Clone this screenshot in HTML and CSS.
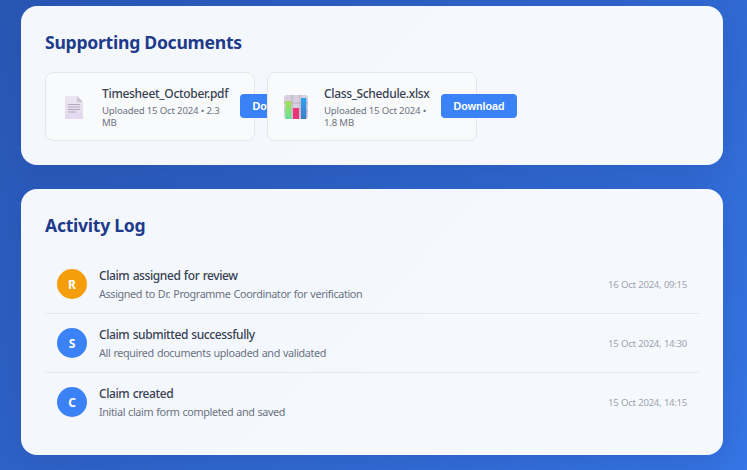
FILE: index.html
```html
<!DOCTYPE html>
<html lang="en">
<head>
<meta charset="utf-8">
<title>Claim details</title>
<link rel="stylesheet" href="styles.css">
</head>
<body>
<main class="page">
  <section class="card">
    <h2 class="card-title">Supporting Documents</h2>
    <div class="documents">
      <article class="document">
        <div class="document-icon">
          <svg width="24" height="24" viewBox="0 0 24 24">
            <defs><linearGradient id="paper" x1="0" y1="0" x2="0" y2="1"><stop offset="0" stop-color="#ece6f3"/><stop offset="1" stop-color="#e3d8ee"/></linearGradient></defs>
            <path d="M3 1H15L21 7V24H3Z" fill="url(#paper)"/>
            <path d="M15 1L21 7H15Z" fill="#cdc6d2"/>
            <path d="M6 9.5H18M6 14.5H18" stroke="#b3a9bb" stroke-width="1"/>
            <path d="M6 12H18M6 17H14" stroke="#c4bbcc" stroke-width="1.6"/>
          </svg>
        </div>
        <div class="document-info info-pdf">
          <div class="document-name">Timesheet_October.pdf</div>
          <div class="document-meta">Uploaded 15 Oct 2024 • 2.3<br>MB</div>
        </div>
        <button class="download">Download</button>
      </article>
      <article class="document">
        <div class="document-icon">
          <svg width="24" height="24" viewBox="0 0 24 24">
            <defs>
              <linearGradient id="green" x1="0" y1="0" x2="0" y2="1"><stop offset="0" stop-color="#a8df4c"/><stop offset="1" stop-color="#5ee596"/></linearGradient>
              <linearGradient id="blue" x1="0" y1="0" x2="0" y2="1"><stop offset="0" stop-color="#2aa2ee"/><stop offset="1" stop-color="#3b7ccc"/></linearGradient>
            </defs>
            <rect width="24" height="24" rx="3" fill="#d7cfdf"/>
            <path d="M8 0V24M16 0V24M0 8H24M0 16H24" stroke="#b9b1c3" stroke-width="1"/>
            <path d="M1.5 6H7.2V24H1.5Z" fill="url(#green)"/>
            <path d="M9 13H15V24H9Z" fill="#ed3479"/>
            <path d="M17 3H22.3V24H17Z" fill="url(#blue)"/>
          </svg>
        </div>
        <div class="document-info info-xlsx">
          <div class="document-name">Class_Schedule.xlsx</div>
          <div class="document-meta">Uploaded 15 Oct 2024 •<br>1.8 MB</div>
        </div>
        <button class="download">Download</button>
      </article>
    </div>
  </section>
  <section class="card">
    <h2 class="card-title">Activity Log</h2>
    <ul class="activities">
      <li class="activity">
        <div class="avatar review">R</div>
        <div class="activity-info">
          <div class="activity-name">Claim assigned for review</div>
          <div class="activity-text">Assigned to Dr. Programme Coordinator for verification</div>
        </div>
        <time class="activity-time">16 Oct 2024, 09:15</time>
      </li>
      <li class="activity">
        <div class="avatar">S</div>
        <div class="activity-info">
          <div class="activity-name">Claim submitted successfully</div>
          <div class="activity-text">All required documents uploaded and validated</div>
        </div>
        <time class="activity-time">15 Oct 2024, 14:30</time>
      </li>
      <li class="activity">
        <div class="avatar">C</div>
        <div class="activity-info">
          <div class="activity-name">Claim created</div>
          <div class="activity-text">Initial claim form completed and saved</div>
        </div>
        <time class="activity-time">15 Oct 2024, 14:15</time>
      </li>
    </ul>
  </section>
</main>
</body>
</html>
```
FILE: styles.css
```css
* { box-sizing: border-box; margin: 0; padding: 0; }
body {
  height: 470px;
  overflow: hidden;
  background: linear-gradient(135deg, #2957b4 0%, #3676e6 100%);
  font-family: "Noto Sans", "Open Sans", sans-serif;
  color: #374151;
}
.page { display: flex; flex-direction: column; gap: 24px; padding: 6px 24px 15px 21px; }
.card {
  padding: 24px;
  border-radius: 16px;
  background: linear-gradient(135deg, #f4f8fd 0%, #f4f8fe 45%, #f6f8fd 65%, #f5f9fe 100%);
  box-shadow: 0 8px 32px rgba(30, 58, 138, 0.25);
}
.card-title { height: 26px; margin-bottom: 16px; font-size: 17.6px; line-height: 24px; font-weight: 700; letter-spacing: -0.27px; color: #1e3a8a; white-space: nowrap; }
.documents { display: grid; grid-template-columns: repeat(3, 210px); gap: 12px; }
.document {
  display: flex; align-items: center; gap: 12px;
  position: relative;
  height: 69px; padding: 12px;
  border: 1px solid #e5e7eb; border-radius: 8px;
  background: #f9fafc;
}
.document-icon { display: flex; justify-content: center; flex: 0 0 32px; }
.document-info { flex: none; white-space: nowrap; }
.info-pdf { width: 126px; }
.info-xlsx { width: 105px; }
.document-name { font-size: 12px; line-height: 17px; font-weight: 500; letter-spacing: -0.29px; }
.info-xlsx .document-name { letter-spacing: -0.34px; }
.document-meta { font-size: 9.6px; line-height: 12px; letter-spacing: -0.17px; color: #6b7280; padding-top: 3px; }
.download {
  flex: none; width: 76px; height: 24px; margin-bottom: 2px;
  border: 0; border-radius: 4px;
  background: #3b82f6; color: #fff;
  font: 700 10.7px "Liberation Sans", sans-serif;
}
.activities { list-style: none; }
.activity { display: flex; align-items: center; gap: 12px; height: 59px; padding: 0 12px; border-bottom: 1px solid #e5e7eb; }
.activity:last-child { height: 58px; border-bottom: 0; }
.avatar {
  display: flex; align-items: center; justify-content: center;
  width: 30px; height: 30px; padding-top: 2px; border-radius: 50%;
  background: #3b82f6; color: #fff; font-size: 12px; font-weight: 700; line-height: 1;
}
.avatar.review { background: #f59e0b; }
.activity-info { flex: 1; padding-top: 2px; white-space: nowrap; }
.activity-name { font-size: 12px; line-height: 18px; font-weight: 500; letter-spacing: -0.4px; word-spacing: 0.6px; }
.activity-text { font-size: 10.8px; line-height: 18px; letter-spacing: -0.37px; word-spacing: 0.6px; color: #6b7280; }
.activity-time { font-size: 9.6px; letter-spacing: -0.29px; word-spacing: 0.4px; color: #9ca3af; white-space: nowrap; }
```
